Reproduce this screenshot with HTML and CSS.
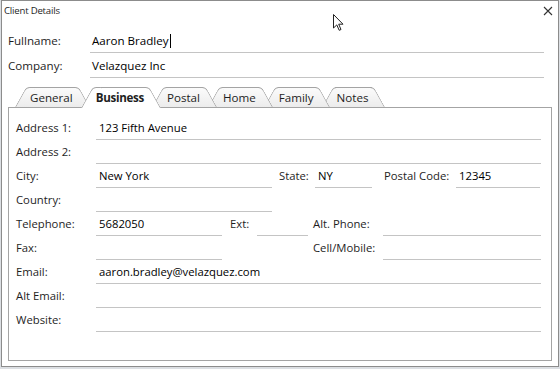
FILE: index.html
```html
<!DOCTYPE html>
<html>
<head>
    <title>Client Details</title>
    <link rel="stylesheet" href="styles.css">
</head>
<body>
    <div class="window">
        <div class="title-bar">
            <span class="title">Client Details</span>
            <svg class="close-btn" width="10" height="10" viewBox="0 0 10 10">
                <path d="M1 1 L9 9 M9 1 L1 9" stroke="#333" stroke-width="1.1" fill="none"/>
            </svg>
        </div>

        <div class="client-head">
            <div class="head-row">
                <span class="head-label">Fullname:</span>
                <div class="head-field">Aaron Bradley<span class="caret"></span></div>
            </div>
            <div class="head-row">
                <span class="head-label">Company:</span>
                <div class="head-field">Velazquez Inc</div>
            </div>
        </div>

        <div class="tabs">
            <div class="tab">General</div>
            <div class="tab active">Business</div>
            <div class="tab">Postal</div>
            <div class="tab">Home</div>
            <div class="tab">Family</div>
            <div class="tab">Notes</div>
        </div>

        <div class="tab-panel">
            <div class="row">
                <span class="label">Address 1:</span>
                <div class="field grow">123 Fifth Avenue</div>
            </div>
            <div class="row">
                <span class="label">Address 2:</span>
                <div class="field grow"></div>
            </div>
            <div class="row">
                <span class="label">City:</span>
                <div class="field city">New York</div>
                <span class="label state-label">State:</span>
                <div class="field state">NY</div>
                <span class="label postal-label">Postal Code:</span>
                <div class="field postal">12345</div>
            </div>
            <div class="row">
                <span class="label">Country:</span>
                <div class="field city"></div>
            </div>
            <div class="row">
                <span class="label">Telephone:</span>
                <div class="field phone">5682050</div>
                <span class="label ext-label">Ext:</span>
                <div class="field ext"></div>
                <span class="label alt-label">Alt. Phone:</span>
                <div class="field grow"></div>
            </div>
            <div class="row">
                <span class="label">Fax:</span>
                <div class="field phone"></div>
                <span class="label alt-label cell-label">Cell/Mobile:</span>
                <div class="field grow"></div>
            </div>
            <div class="row">
                <span class="label">Email:</span>
                <div class="field grow">aaron.bradley@velazquez.com</div>
            </div>
            <div class="row">
                <span class="label">Alt Email:</span>
                <div class="field grow"></div>
            </div>
            <div class="row">
                <span class="label">Website:</span>
                <div class="field grow"></div>
            </div>
        </div>

        <!-- mouse pointer -->
        <svg class="pointer" width="12" height="18" viewBox="0 0 12 18">
            <path d="M0.5 0.5 L0.5 14 L3.8 10.9 L6.2 16.3 L8 15.5 L5.7 10.2 L10 10.2 Z" fill="#fff" stroke="#222" stroke-width="1" stroke-linejoin="round"/>
        </svg>
    </div>
</body>
</html>
```

FILE: styles.css
```css
:root {
    --line: #c4c4c4;
    --tab-border: #a4a4a4;
    --text: #1e1e1e;
}

html, body {
    margin: 0;
    padding: 0;
    background: #dcdfe3;
}

body {
    font-family: 'Open Sans', 'Noto Sans', sans-serif;
    font-size: 11.3px;
    color: var(--text);
}

.window {
    position: relative;
    box-sizing: border-box;
    width: 558px;
    height: 367px;
    margin-left: 1px;
    background: white;
    border: 1px solid #8c8c8c;
    display: flex;
    flex-direction: column;
    padding: 0 6px 5px 6px;
}

.title-bar {
    height: 20px;
    display: flex;
    align-items: center;
    justify-content: space-between;
    margin: 0 -6px 0 -4px;
}

.title {
    font-size: 9.6px;
    line-height: 20px;
    letter-spacing: -0.2px;
}

.close-btn {
    margin-right: 5px;
}

.client-head {
    margin-top: 9px;
    display: flex;
    flex-direction: column;
    gap: 2px;
}

.head-row {
    display: flex;
    font-size: 11.6px;
}

.head-label {
    width: 82px;
    line-height: 22px;
}

.head-field {
    flex: 1;
    margin-right: 8px;
    height: 22px;
    line-height: 22px;
    padding-left: 2px;
    border-bottom: 1px solid var(--line);
    color: #000;
}

.caret {
    display: inline-block;
    width: 1px;
    height: 14px;
    background: #000;
    vertical-align: -3px;
    margin-left: 1px;
}

/* tabs */
.tabs {
    position: relative;
    z-index: 2;
    display: flex;
    align-items: flex-start;
    height: 21px;
    margin: 9px 0 -1px 7px;
}

.tab {
    position: relative;
    z-index: 1;
    height: 20px;
    line-height: 22px;
    padding: 0 17px 0 15px;
    margin-left: -9px;
    font-size: 11.6px;
}

.tab:first-child {
    margin-left: 0;
}

.tab::before,
.tab::after {
    content: "";
    position: absolute;
    top: 0;
    bottom: 0;
    width: 60%;
    z-index: -1;
    background: linear-gradient(#fbfbfb, #ececec);
    border: 1px solid var(--tab-border);
    border-bottom: none;
    transform-origin: bottom;
}

.tab::before {
    left: 0;
    border-right: none;
    border-radius: 4px 0 0 0;
    transform: skewX(-29deg);
}

.tab::after {
    right: 0;
    border-left: none;
    border-radius: 0 4px 0 0;
    transform: skewX(29deg);
}

.tab:nth-child(3) { z-index: 5; }
.tab:nth-child(4) { z-index: 4; }
.tab:nth-child(5) { z-index: 3; }
.tab:nth-child(6) { z-index: 2; }

.tab.active {
    z-index: 10;
    height: 21px;
    font-weight: bold;
    letter-spacing: -0.3px;
}

.tab.active::before,
.tab.active::after {
    background: white;
}

.tab-panel {
    flex: 1;
    border: 1px solid var(--tab-border);
    padding: 9px 10px 0 7px;
    display: flex;
    flex-direction: column;
}

.row {
    display: flex;
    height: 24px;
}

.label {
    width: 80px;
    line-height: 22px;
    white-space: nowrap;
}

.field {
    box-sizing: border-box;
    height: 23px;
    line-height: 22px;
    padding-left: 3px;
    border-bottom: 1px solid var(--line);
    color: #000;
}

.field.grow { flex: 1; }
.field.city { width: 176px; }
.field.state { width: 57px; }
.field.postal { width: 84px; }
.field.phone { width: 126px; }
.field.ext { width: 51px; }

.state-label {
    width: 36px;
    margin-left: 7px;
}

.postal-label {
    width: 72px;
    margin-left: 12px;
}

.ext-label {
    width: 27px;
    margin-left: 8px;
}

.alt-label {
    width: 70px;
    margin-left: 5px;
}

.cell-label {
    margin-left: 91px;
}

.pointer {
    position: absolute;
    left: 331px;
    top: 13px;
}
```
